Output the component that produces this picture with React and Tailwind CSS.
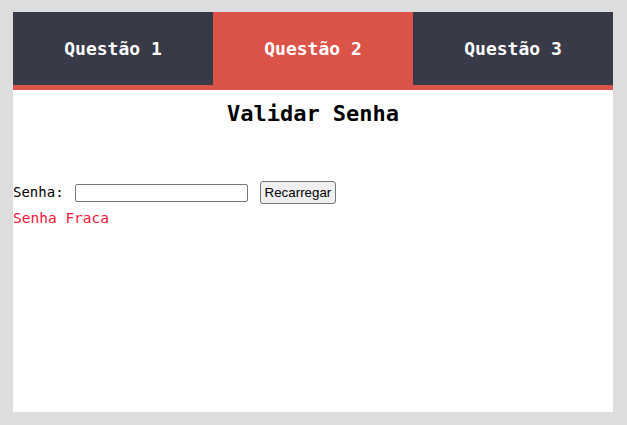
import React from "react";

export default function App() {
  const tabs = ["Questão 1", "Questão 2", "Questão 3"];
  return (
    <div className="w-[627px] h-[425px] bg-[#dddddd] pt-[12px] pl-[13px]">
      <div className="w-[600px] h-[400px] bg-white flex flex-col" style={{ fontFamily: '"DejaVu Sans Mono", monospace' }}>
        <div className="flex border-b-[5px] border-[#dc5349]">
          {tabs.map((t, i) => (
            <div
              key={t}
              className={
                "w-[200px] h-[73px] flex items-center justify-center text-white text-[18px] font-bold " +
                (i === 1 ? "bg-[#dc5349]" : "bg-[#393a48]")
              }
            >
              {t}
            </div>
          ))}
        </div>
        <div className="mt-[11px] text-center text-[22px] leading-[26px] font-bold text-black">Validar Senha</div>
        <div className="mt-[54px] flex items-center h-[23px] text-[14px] text-black">
          <span>Senha:</span>
          <input
            type="password"
            className="ml-[11px] w-[173px] h-[18px] border border-[#767676] rounded-[2px] bg-white outline-none"
          />
          <button
            className="ml-[12px] h-[23px] px-[4px] border border-[#767676] rounded-[3px] bg-[#efefef] text-[13.33px] text-black"
            style={{ fontFamily: '"Liberation Sans", Arial, sans-serif' }}
          >
            Recarregar
          </button>
        </div>
        <div className="mt-[5px] text-[14.5px] leading-[18px] text-[#f5143c]">Senha Fraca</div>
      </div>
    </div>
  );
}
